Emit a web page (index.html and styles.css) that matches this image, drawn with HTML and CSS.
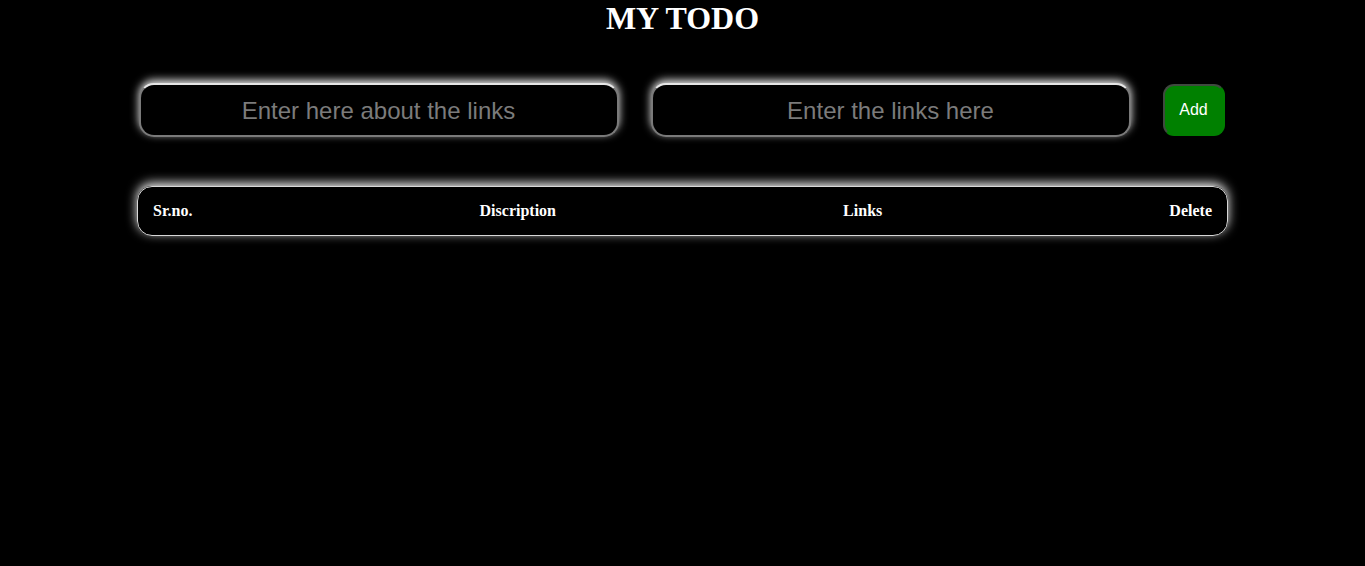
FILE: index.html
```html
<!DOCTYPE html>
<html>
<head>
<meta charset="utf-8">
<title>MY TODO</title>
<link rel="stylesheet" href="styles.css">
</head>
<body>
<h1 class="title">MY TODO</h1>
<div class="form-row">
  <input class="field" type="text" placeholder="Enter here about the links">
  <input class="field" type="text" placeholder="Enter the links here">
  <button class="add-btn">Add</button>
</div>
<div class="table-head">
  <span class="col">Sr.no.</span>
  <span class="col">Discription</span>
  <span class="col">Links</span>
  <span class="col">Delete</span>
</div>
</body>
</html>
```
FILE: styles.css
```css
html, body {
  margin: 0;
  padding: 0;
  background: #000;
  height: 100%;
}
body {
  font-family: "Liberation Serif", "Times New Roman", serif;
  color: #fff;
}
.title {
  margin: 0;
  text-align: center;
  font-size: 32px;
  line-height: 37px;
  font-weight: bold;
  color: #fff;
}
.form-row {
  display: flex;
  justify-content: center;
  align-items: center;
  gap: 32px;
  margin-top: 46px;
  padding-right: 2px;
}
.field {
  box-sizing: border-box;
  width: 480px;
  height: 54px;
  background: #000;
  border: 2px solid #7a7a7a;
  border-top-color: #e6e6e6;
  border-radius: 15px;
  box-shadow: 0 -3px 8px rgba(255, 255, 255, 0.9);
  color: #fff;
  font-family: "Liberation Sans", Arial, sans-serif;
  font-size: 24px;
  text-align: center;
  outline: none;
  padding: 2px 10px 0;
}
.field::placeholder {
  color: #7b7b7b;
}
.add-btn {
  box-sizing: border-box;
  width: 62px;
  height: 52px;
  background: #008000;
  border: 2px solid #008000;
  border-top-color: #3f4a3f;
  border-left-color: #3f4a3f;
  border-radius: 11px;
  color: #fff;
  font-family: "Liberation Sans", Arial, sans-serif;
  font-size: 16px;
  padding: 0;
}
.table-head {
  box-sizing: border-box;
  width: 1091px;
  height: 50px;
  margin: 49px auto 0;
  border: 1px solid #d8d8d8;
  border-radius: 15px;
  box-shadow: 0 -3px 11px rgba(255, 255, 255, 0.95);
  display: flex;
  justify-content: space-between;
  align-items: center;
  padding: 0 15px;
}
.col {
  font-weight: bold;
  font-size: 16px;
  color: #fff;
}
```
